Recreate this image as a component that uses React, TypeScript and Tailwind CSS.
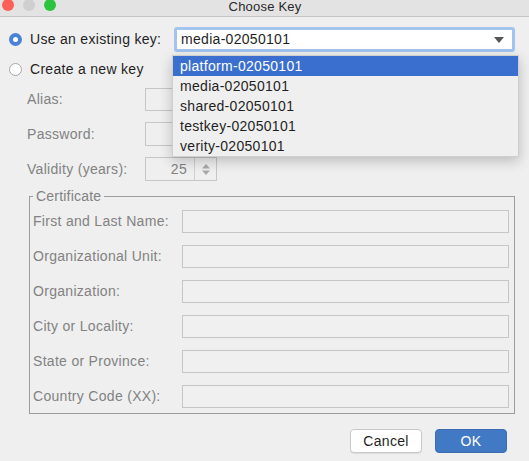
import React from "react";

const font = { fontFamily: '"Liberation Sans", Arial, sans-serif' };

const keys = ["platform-02050101", "media-02050101", "shared-02050101", "testkey-02050101", "verity-02050101"];

const certFields = [
  "First and Last Name:",
  "Organizational Unit:",
  "Organization:",
  "City or Locality:",
  "State or Province:",
  "Country Code (XX):",
];

function Field() {
  return <div className="h-[23px] flex-1 border border-[#c6c6c6] bg-[#f0f0f0]" />;
}

export default function App() {
  return (
    <div
      className="w-[529px] h-[461px] bg-[#efefef] flex flex-col text-[14px] tracking-[0.3px] text-[#1f1f1f] overflow-hidden"
      style={font}
    >
      {/* title bar */}
      <div className="relative h-[17px] shrink-0 bg-[#e3e3e3] border-b border-[#c4c4c4] flex items-start">
        <div className="flex gap-[9px] pl-[2px] -mt-[1px]">
          <span className="w-[12px] h-[12px] rounded-full bg-[#fc5f57]" />
          <span className="w-[12px] h-[12px] rounded-full bg-[#cfcfcf]" />
          <span className="w-[12px] h-[12px] rounded-full bg-[#2cc33f]" />
        </div>
        <div className="flex-1 text-center text-[13px] leading-[14px] tracking-[0.2px] text-[#2a2a2a] -ml-[55px]">
          Choose Key
        </div>
      </div>

      <div className="relative flex flex-col">
        {/* use existing */}
        <div className="mt-[10px] h-[25px] flex items-center">
          <div className="ml-[9px] w-[13px] h-[13px] rounded-full bg-[#4a82d8] flex items-center justify-center">
            <span className="w-[5px] h-[5px] rounded-full bg-white" />
          </div>
          <span className="ml-[8px] w-[144px]">Use an existing key:</span>
          <div className="w-[341px] h-[25px] rounded-[3px] border-[3px] border-[#a3c4ee] bg-white flex items-center pl-[4px] pr-[8px]">
            <span className="flex-1">media-02050101</span>
            <svg width="10" height="6" viewBox="0 0 10 6">
              <path d="M0 0 H10 L5 6 Z" fill="#555" />
            </svg>
          </div>
        </div>

        {/* create new */}
        <div className="mt-[6px] h-[22px] flex items-center">
          <span className="ml-[9px] w-[13px] h-[13px] rounded-full border border-[#a8a8a8] bg-white" />
          <span className="ml-[8px]">Create a new key</span>
        </div>

        <div className="flex flex-col text-[#828282]">
          <div className="mt-[8px] flex items-center">
            <span className="pl-[27px] w-[145px]">Alias:</span>
            <div className="w-[370px] h-[23px] border border-[#c6c6c6]" />
          </div>
          <div className="mt-[11px] flex items-center">
            <span className="pl-[27px] w-[145px]">Password:</span>
            <div className="w-[370px] h-[24px] border border-[#c6c6c6]" />
          </div>
          <div className="mt-[11px] flex items-center">
            <span className="pl-[27px] w-[145px]">Validity (years):</span>
            <div className="w-[72px] h-[24px] border border-[#c6c6c6] flex items-stretch">
              <span className="flex-1 text-right pr-[7px] leading-[22px]">25</span>
              <span className="w-[22px] border-l border-[#d0d0d0] flex items-center justify-center">
                <svg width="8" height="11" viewBox="0 0 8 11">
                  <path d="M0 4.5 L4 0 L8 4.5 Z M0 6.5 L8 6.5 L4 11 Z" fill="#a9a9a9" />
                </svg>
              </span>
            </div>
          </div>

          <fieldset className="mt-[7px] ml-[29px] w-[486px] h-[226px] border border-[#9d9d9d]">
            <legend className="ml-[3px] px-[3px] leading-[16px] tracking-[0.2px]">Certificate</legend>
            <div className="pt-[6px] flex flex-col gap-[12px]">
              {certFields.map((f) => (
                <div key={f} className="flex items-center pr-[5px]">
                  <span className="pl-[3px] w-[152px] whitespace-nowrap">{f}</span>
                  <Field />
                </div>
              ))}
            </div>
          </fieldset>
        </div>

        {/* buttons */}
        <div className="mt-[15px] flex justify-end gap-[13px] pr-[22px]">
          <button className="w-[72px] h-[24px] rounded-[4px] bg-white border border-[#c8c8c8] shadow-[0_1px_1px_rgba(0,0,0,0.08)] text-[#1f1f1f]">
            Cancel
          </button>
          <button className="w-[72px] h-[24px] rounded-[4px] bg-[#4279c4] border border-[#3c6db0] text-white">
            OK
          </button>
        </div>

        {/* open dropdown */}
        <div className="absolute left-[172px] top-[38px] w-[347px] bg-[#efefef] border border-[#cfcfcf] shadow-[0_4px_12px_rgba(0,0,0,0.22)] flex flex-col">
          {keys.map((k, i) => (
            <div
              key={k}
              className={
                i === 0
                  ? "h-[20px] leading-[20px] pl-[7px] bg-[#3a6fd0] text-white"
                  : "h-[20px] leading-[20px] pl-[7px] text-[#1f1f1f]"
              }
            >
              {k}
            </div>
          ))}
        </div>
      </div>
    </div>
  );
}
